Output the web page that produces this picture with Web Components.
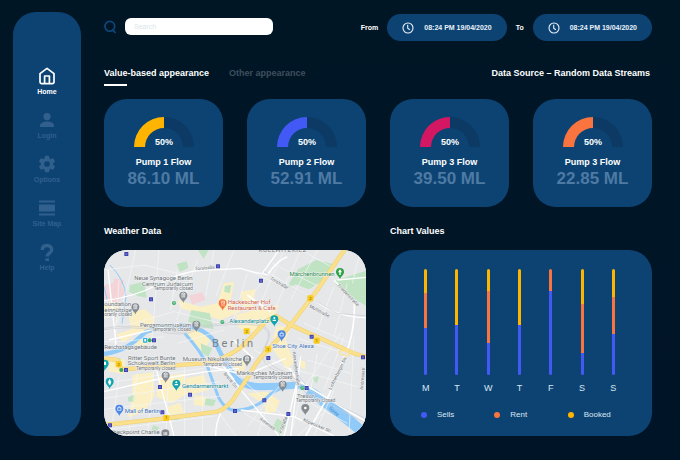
<!DOCTYPE html>
<html lang="en">
<head>
<meta charset="utf-8">
<meta name="viewport" content="width=device-width, initial-scale=1">
<title>Pump Dashboard</title>
<style>
html{background:#001525}
body{margin:0;min-height:100vh;font-family:"Liberation Sans",Arial,sans-serif;color:#fff;background:linear-gradient(180deg,#001625,#001427);--panel:#0d4373;--yellow:#ffb400;--blue:#4359f6;--orange:#f9743f;--pink:#d31763}
</style>
</head>
<body>
<pump-dashboard></pump-dashboard>

<template id="t-dashboard">
<style>
:host{display:grid;grid-template-columns:68px minmax(0,1fr);gap:23px;padding:12px 28px 24px 13px}
main{padding-top:2px}
header{display:flex;align-items:center;justify-content:space-between}
.dates{display:flex;gap:9px}
.bar{display:flex;justify-content:space-between;align-items:flex-start;margin:26px 2px 13px 0}
h2{margin:0;font-size:9px;line-height:12px;font-weight:700}
.cards{display:grid;grid-template-columns:repeat(4,minmax(0,1fr));gap:24px}
.panels{display:grid;grid-template-columns:repeat(2,minmax(0,1fr));gap:24px;margin-top:18px}
section{display:flex;flex-direction:column;gap:13px}
section>:last-child{flex:1}
</style>
<side-nav></side-nav>
<main>
<header>
<search-box></search-box>
<div class="dates">
<date-pill label="From">08:24 PM 19/04/2020</date-pill>
<date-pill label="To">08:24 PM 19/04/2020</date-pill>
</div>
</header>
<div class="bar">
<view-tabs></view-tabs>
<h2>Data Source – Random Data Streams</h2>
</div>
<div class="cards">
<pump-card style="--arc:var(--yellow)" value="86.10 ML">Pump 1 Flow</pump-card>
<pump-card style="--arc:var(--blue)" value="52.91 ML">Pump 2 Flow</pump-card>
<pump-card style="--arc:var(--pink)" value="39.50 ML">Pump 3 Flow</pump-card>
<pump-card style="--arc:var(--orange)" value="22.85 ML">Pump 3 Flow</pump-card>
</div>
<div class="panels">
<section><h2>Weather Data</h2><city-map></city-map></section>
<section><h2>Chart Values</h2><week-chart></week-chart></section>
</div>
</main>
</template>

<template id="t-nav">
<style>
:host{display:block;background:var(--panel);border-radius:23px}
nav{display:flex;flex-direction:column;gap:15px;padding:55px 0 24px}
</style>
<nav aria-label="Main">
<nav-item current>Home<svg slot="icon" viewBox="0 0 18 18" fill="none" stroke="#fff" stroke-width="1.7" stroke-linejoin="round"><path d="M2 6.6 9 1.4l7 5.2v8.2q0 1.8-1.8 1.8H3.800Q2 16.600 2 14.800zM6.600 16.600V9h4.800v7.600"/></svg></nav-item>
<nav-item>Login<svg slot="icon" viewBox="0 0 18 18" fill="currentColor"><circle cx="9" cy="5.600" r="3.600"/><path d="M2 16v-1.600c0-2.600 4.300-3.900 7-3.900s7 1.300 7 3.900V16z"/></svg></nav-item>
<nav-item>Options<svg slot="icon" viewBox="1 1 22 22" fill="currentColor"><path d="M19.430 12.980c.04-.32.07-.64.07-.98s-.03-.66-.07-.98l2.110-1.650c.19-.15.24-.42.12-.64l-2-3.460c-.12-.22-.39-.3-.61-.22l-2.490 1c-.52-.4-1.080-.73-1.690-.98l-.38-2.650A.49.490 0 0 0 14 2h-4c-.25 0-.46.18-.49.420l-.38 2.650c-.61.25-1.170.59-1.690.98l-2.490-1c-.23-.09-.49 0-.61.220l-2 3.460c-.13.220-.07.490.12.640l2.110 1.650c-.04.320-.07.650-.07.980s.03.660.07.980l-2.110 1.650c-.19.150-.24.420-.12.640l2 3.460c.12.220.39.300.61.220l2.490-1c.52.400 1.080.730 1.690.980l.38 2.650c.03.240.24.420.49.420h4c.25 0 .46-.18.49-.42l.38-2.650c.61-.25 1.170-.59 1.690-.98l2.490 1c.23.090.49 0 .61-.22l2-3.460c.12-.22.07-.49-.12-.64zM12 15.500a3.500 3.500 0 1 1 0-7 3.500 3.500 0 0 1 0 7z"/></svg></nav-item>
<nav-item>Site Map<svg slot="icon" viewBox="0 0 18 18" fill="currentColor"><path d="M1 1.500h16v2H1zM1 5.500h16v7H1zM1 14.500h16v2H1z"/></svg></nav-item>
<nav-item>Help<svg slot="icon" viewBox="0 0 18 18" fill="none" stroke="currentColor" stroke-width="3.400"><path d="M4.300 7C4.300 4 6.300 2.500 9 2.500s4.700 1.600 4.700 4.200c0 3.400-4.500 3.400-4.500 6.800"/><path d="M7.400 17h3.600"/></svg></nav-item>
</nav>
</template>

<template id="t-navitem">
<style>
:host{display:block;color:#31608d}
:host([current]){color:#fff}
a{display:flex;flex-direction:column-reverse;align-items:center;gap:3px;color:inherit;text-decoration:none;font-size:7px;line-height:8px;font-weight:700}
::slotted(svg){display:block;width:18px;height:18px}
</style>
<a href="#"><span><slot></slot></span><slot name="icon"></slot></a>
</template>

<template id="t-search">
<style>
:host{display:flex;align-items:center;gap:8px;margin-top:-2px}
svg{width:13px;height:14px}
input{box-sizing:border-box;width:148px;height:17px;border:0;border-radius:6px;padding:0 9px;background:#fff;color:#123;font:7px "Liberation Sans",Arial,sans-serif}
input::placeholder{color:#d9e7ea;opacity:1}
</style>
<svg viewBox="0 0 13 14" fill="none" stroke="#0f4679" stroke-width="1.800" aria-hidden="true"><circle cx="5.800" cy="6.300" r="4.900"/><path d="m8.300 9.300 3.200 3.700"/></svg>
<input type="search" placeholder="Search" aria-label="Search">
</template>

<template id="t-date">
<style>
:host{display:flex;align-items:center;gap:9px;font-size:7px;font-weight:700}
button{display:flex;align-items:center;gap:10px;height:27px;padding:0 15px;border:0;border-radius:14px;background:var(--panel);color:#e9f2fa;font:inherit}
svg{width:12px;height:12px}
</style>
<label for="when"></label>
<button id="when" type="button"><svg viewBox="0 0 12 12" fill="none" stroke="currentColor" stroke-width="1.100"><circle cx="6" cy="6" r="5"/><path d="M5.700 2.800v3.500l2.200 1.500"/></svg><span><slot></slot></span></button>
</template>

<template id="t-tabs">
<style>
:host{display:flex;gap:20px}
button{display:flex;flex-direction:column;gap:5px;padding:0;border:0;background:none;color:#3f4f5e;font:700 9px/12px "Liberation Sans",Arial,sans-serif}
button::after{content:"";width:23px;height:2px}
button[aria-selected=true]{color:#fff}
button[aria-selected=true]::after{background:#fff}
</style>
<button type="button" role="tab" aria-selected="true">Value-based appearance</button>
<button type="button" role="tab" aria-selected="false">Other appearance</button>
</template>

<template id="t-pump">
<style>
:host{display:flex;flex-direction:column;align-items:center;padding:18px 0;border-radius:23px;background:var(--panel);font-weight:700}
svg{width:60px;height:30px;margin-bottom:9px}
.name{font-size:9px;line-height:12px}
.value{margin-top:1px;font-size:17px;line-height:20px;color:#4e7aa3}
</style>
<svg viewBox="0 0 60 30"><path fill="#0c3a64" d="M30 0a30 30 0 0 1 30 30H49A19 19 0 0 0 30 11z"/><path fill="var(--arc)" d="M0 30A30 30 0 0 1 30 0V11A19 19 0 0 0 11 30z"/><text x="30" y="28" text-anchor="middle" font-size="9" fill="#fff">50%</text></svg>
<div class="name"><slot></slot></div>
<div class="value"></div>
</template>

<template id="t-chart">
<style>
:host{display:block;border-radius:23px;background:var(--panel);color:#dbe7f2;font-size:8px}
.days{display:grid;grid-template-columns:repeat(7,1fr);padding:19px 23px 0 20px}
.legend{display:grid;grid-template-columns:repeat(3,1fr);padding:17px 11px 15px 31px}
</style>
<div class="days"></div>
<div class="legend">
<legend-item style="--dot:var(--blue)">Sells</legend-item>
<legend-item style="--dot:var(--orange)">Rent</legend-item>
<legend-item style="--dot:var(--yellow)">Booked</legend-item>
</div>
</template>

<template id="t-day">
<style>
:host{display:flex;flex-direction:column;align-items:center;gap:8px;line-height:10px;font-size:9px}
.bar{display:flex;flex-direction:column;width:3px;height:106px;border-radius:2px;overflow:hidden}
.b{background:var(--yellow)}.r{background:var(--orange)}.s{background:var(--blue)}
</style>
<div class="bar"><i class="b"></i><i class="r"></i><i class="s"></i></div>
<span><slot></slot></span>
</template>

<template id="t-legend">
<style>
:host{display:flex;align-items:center;gap:10px;line-height:10px}
:host::before{content:"";width:6px;height:6px;border-radius:50%;background:var(--dot)}
</style>
<span><slot></slot></span>
</template>

<template id="t-map">
<style>
:host{display:block;border-radius:23px;overflow:hidden;background:#e6e7e9}
svg{display:block;width:100%;height:100%;aspect-ratio:262/186;font-family:Roboto,sans-serif}
.halo text{paint-order:stroke;stroke:#f3f4f5;stroke-width:3;stroke-linejoin:round}
</style>
<svg viewBox="0 0 786 558" preserveAspectRatio="xMidYMid slice" role="img" aria-label="Map of central Berlin">
<defs>
<g id="pin"><path d="M0 0C-2-9-12-13-12-22a12 12 0 0 1 24 0C12-13 2-9 0 0z"/></g>
<g id="u"><rect x="-6" y="-6" width="12" height="12" rx="1" fill="#3a3fb0"/><path d="M-2-3V1q0 2 2 2t2-2V-3" fill="none" stroke="#c9cbf2" stroke-width="1"/></g>
<g id="road"><rect x="-9" y="-9" width="18" height="18" rx="3" fill="#f8cb1c"/></g>
</defs>
<rect width="786" height="558" fill="#e6e7e9"/>
<g fill="#fbefc4">
<path d="m72 190 50-12 30 25-10 50-45-5-40 30-20-25 45-15zM20 320l45 10-8 42-45-8zM85 375l62-8 5 70-30 50-52 15 15-60zM165 380l75-10 12 60-50 30-45-20zM245 385l55-10 15 45-60 15zM190 470l40-12 10 30-45 8zM360 100l30-5-10 60 30 30-60 25-120-35-10-25 70 20 50-10zM395 195l70-20 60-10-20 50-60 30-40-10zM240 240l40-10 40 40-25 35zM385 320l40 10-5 45-25-10zM495 280l50-10 25 65-20 25zM430 430l60-5 40 30-20 15-50-20zM480 465l45-8-10 28-28 5zM85 265l50 5-10 20-50-8zM0 160l40-5 5 25-45 25zM590 330l15 5-2 24-20-12zM410 125l45-8-8 50-30 20zM520 225l40 10-15 35-40-5zM270 435l35 5-5 30-30-5z"/>
</g>
<g fill="#bfe3c3">
<path d="m582 58 55-28 50 12-12 38-60 38-40-15-30 15zM692 92l94-30v105l-50-28-38-30zM262 180l55 10 12 48-35-8-42-15zM78 105l42-10 8 48-26-5-26-12zM282 0h32l-15 26zM218 42l30-8 5 20-25 12zM362 108l20-3-5 25-16-5zM290 280l35 15-12 25-20-12zM624 385l22-8-8 24zM306 445l30 5-8 18-26-3zM72 442l20-8-2 22-18-2zM425 265l14 12-10 12-8-14zM520 505l30 20-25 33-20-25zM148 525l18 8-10 14-14-6zM205 495l22 3-5 14-20-4zM10 325h40v8H10z"/>
</g>
<g fill="#f3d4d8"><path d="m0 105 48-10 15 35-22 28-41-8zM255 137l40-10 10 22-40 15zM30 85l30 5-8 18-25-5z"/></g>
<g fill="none" stroke="#90caf9">
<path stroke-width="13" d="M0 312q45-8 70-23t55-43l40-12q70-15 110 0t60 45q20 45 45 80 25 45 80 48l120 2q40 0 70 28l90 65 55 50"/>
<path stroke-width="21" d="M395 385q25 25 75 25t110-5M610 425l80 58 90 72"/>
<path stroke-width="9" d="M242 250q50 55 68 98l30 85q20 50 60 48 55-5 85-35 25-27 60-35"/>
<path stroke-width="3" d="M18 45q45 45 48 95l-12 80M0 110l10 40"/>
</g>
<g fill="none" stroke="#f6f7f8" stroke-width="2">
<path d="M95 0 75 90 40 220M165 0 142 290M220 60l-20 120M280 30l-62 180M330 0l-25 140M390 0l-55 140M430 70 390 205M480 90l-50 60M540 0l-70 160M590 0l-90 205M640 0 560 150M505 40l140 70M430 60l75 35M690 110 640 240M730 100l-40 160M600 220l140 60M580 265l160 50M540 350l220 60M590 430l120-180M660 420l60-160M750 260l-15 290M610 330l130 40M640 310l-20 110M690 420l-60 138M0 60l120-15 140 35M0 245l210-60 180 45M0 205l80-15M45 90 32 300M45 380l-25 178M100 370 72 558M150 360l-20 198M195 350l-10 208M242 345v213M295 360v198M0 400l300-45M0 445l350-50M0 478l350-40M0 540l330-42M370 350l170 150M340 480l55 78M500 440l-40 118M590 440 560 558M420 490l120 68M450 300l110 60M620 460l110 60M670 480l-90 78M430 530l110-140M360 240l-140 40M0 275h60l120-15M770 0l-25 100M700 60l-100-55"/>
</g>
<g fill="none" stroke="#fff">
<path stroke-width="4" d="M0 152q90-10 165-50T300 60t110-5q45 15 90 20l130 75q70 52 156 53M12 60l25 230M0 425l150-35 160-25 95-10M300 345l125 30 120-50M15 270l210-50M590 320l-30 238M540 560l40-170M355 345l60 80 110 133M350 490q-15 30-15 68M155 350l55 208M410 480l160 20 120 58M475 70l50-70M700 90l86-8"/>
<path stroke-width="5" d="M690 90l60 65q5 60-15 130l-60 150-70 123M580 390l206 125M555 355l30 40M388 270l60 55M550 20q-30 10-60 55M430 135l70 50"/>
</g>
<g fill="none" stroke="#c9ccd0" stroke-width="2">
<path d="M0 235q80-15 160 3t110 0 140-20 80 60 60 90l60 50 170 85M0 240q80-15 160 3t110 0 140-20 75 60 60 90l60 55 175 88M570 300v60l35 45M480 65l220 125 90 8"/>
</g>
<g fill="none" stroke-linejoin="round">
<path stroke="#efce72" stroke-width="13" d="M0 525l185-20 155-20q20-5 45-33l50-75q25-50 60-80l65-72 80-105 60-90 25-35M0 325l40 5 12 28 270-20q65-25 100-55l65-70 30-15 45 28 160 72q32 16 64 22"/>
<path stroke="#fbe08c" stroke-width="10" d="M0 525l185-20 155-20q20-5 45-33l50-75q25-50 60-80l65-72 80-105 60-90 25-35M0 325l40 5 12 28 270-20q65-25 100-55l65-70 30-15 45 28 160 72q32 16 64 22"/>
<ellipse cx="720" cy="310" rx="16" ry="6" fill="#e6e7e9" stroke="#fbe29a" stroke-width="4" transform="rotate(18 720 310)"/>
</g>
<use href="#u" x="67" y="12"/><use href="#u" x="342" y="49"/><use href="#u" x="471" y="92"/><use href="#u" x="141" y="148"/><use href="#u" x="150" y="271"/><use href="#u" x="623" y="260"/><use href="#u" x="777" y="322"/><use href="#u" x="493" y="324"/><use href="#u" x="66" y="360"/><use href="#u" x="168" y="411"/><use href="#u" x="258" y="434"/><use href="#u" x="608" y="414"/><use href="#u" x="481" y="451"/><use href="#u" x="393" y="483"/><use href="#u" x="175" y="487"/><use href="#u" x="553" y="492"/><use href="#u" x="18" y="526"/>
<g fill="#34a865"><circle cx="210" cy="159" r="6"/><circle cx="355" cy="216" r="6"/><circle cx="137" cy="271" r="6"/><circle cx="52" cy="360" r="6"/><circle cx="595" cy="414" r="6"/></g>
<g fill="none" stroke="#e0f4e6" stroke-width="1.500"><path d="M207 157q3-3 6 0t-6 3M352 214q3-3 6 0t-6 3M592 412q3-3 6 0t-6 3"/></g>
<rect x="117" y="264" width="13" height="14" rx="2" fill="#29b6e8"/><rect x="121" y="267" width="5" height="7" fill="#fff"/>
<g font-size="12" text-anchor="middle" fill="#6b5200"><use href="#road" x="619" y="145"/><text x="619" y="149">2</text><use href="#road" x="428" y="244"/><text x="428" y="248">2</text><use href="#road" x="638" y="272"/><text x="638" y="276">1</text><use href="#road" x="492" y="298"/><text x="492" y="302">1</text><use href="#road" x="44" y="343"/><text x="44" y="347">2</text><use href="#road" x="187" y="504"/><text x="187" y="508">1</text></g>
<g fill="#858b91"><use href="#pin" x="238" y="159"/><use href="#pin" x="94" y="194"/><use href="#pin" x="277" y="246"/><use href="#pin" x="429" y="350"/><use href="#pin" x="185" y="399"/><use href="#pin" x="536" y="426"/><use href="#pin" x="604" y="496"/><use href="#pin" x="184" y="572"/></g>
<use href="#pin" x="356" y="182" fill="#f4743b"/><use href="#pin" x="708" y="88" fill="#2ea245"/>
<g fill="#12a5b0"><use href="#pin" x="511" y="230"/><use href="#pin" x="217" y="423"/><use href="#pin" x="17" y="417"/><use href="#pin" x="2" y="363"/></g>
<g fill="#4a86e8"><use href="#pin" x="533" y="275"/><use href="#pin" x="46" y="498"/></g>
<g fill="none" stroke="#fff" stroke-width="2"><path d="M232 141h12M234 133v7M238 133v7M242 133v7M232 132l6-4 6 4zM88 176h12M90 168v7M94 168v7M98 168v7M88 167l6-4 6 4zM271 228h12M273 220v7M277 220v7M281 220v7M271 219l6-4 6 4zM423 332h12M425 324v7M429 324v7M433 324v7M423 323l6-4 6 4zM179 381h12M181 373v7M185 373v7M189 373v7M179 372l6-4 6 4zM530 408h12M532 400v7M536 400v7M540 400v7M530 399l6-4 6 4zM178 554h12M180 546v7M184 546v7M188 546v7M352 152v6q0 3 2 3v8M356 152v6M360 169v-17q3 4 0 10M528 250h10v8h-10zM530 249q3-5 6 0M41 473h10v8H41zM43 472q3-5 6 0"/></g>
<g fill="#fff"><circle cx="604" cy="474" r="4"/><path d="m708 57 6 10h-4v8h-4v-8h-4zM17 386l5 10-3 8h-4l-3-8z"/><circle cx="511" cy="204" r="3"/><path d="M506 209h10v4h-10z"/><circle cx="217" cy="397" r="3"/><path d="M212 402h10v4h-10zM0 335h6v10H0z"/></g>
<g class="halo" font-size="18">
<g fill="#6d7378">
<g text-anchor="end"><text x="266" y="89">Neue Synagoge Berlin</text><text x="267" y="107">Centrum Judaicum</text><text x="261" y="231">Pergamonmuseum</text><text x="414" y="334">Museum Nikolaikirche</text><text x="214" y="329">Ritter Sport Bunte</text><text x="214" y="346">Schokowelt Berlin</text><text x="565" y="374">Märkisches Museum</text></g>
<text x="1" y="169">oundation</text><text x="1" y="186">einnützige</text><text x="1" y="297">Reichstagsgebäude</text><text x="28" y="553">heckpoint Charlie</text>
<text x="579" y="443">Tresor</text>
<g font-size="14"><g text-anchor="end"><text x="267" y="120">Temporarily closed</text><text x="261" y="244">Temporarily closed</text><text x="414" y="347">Temporarily closed</text><text x="214" y="360">Temporarily closed</text><text x="565" y="388">Temporarily closed</text></g><text x="1" y="199">orarily closed</text><text x="576" y="456">Temporarily closed</text>
<text transform="translate(273 61) rotate(-5)">Torstraße</text><text transform="translate(497 88) rotate(30)">Torstraße</text><text transform="translate(615 172) rotate(28)">Mollstraße</text><text transform="translate(700 108) rotate(46)">Friedenstraße</text><text transform="translate(566 306) rotate(83)">Alexanderstraße</text><text transform="translate(682 420) rotate(-64)">Lichtenberger Str.</text><text transform="translate(358 372) rotate(50)">Breite Str.</text><text transform="translate(466 508) rotate(38)">Annenstr.</text><text transform="translate(596 513) rotate(23)">Köpenicker Str.</text><text transform="translate(532 550) rotate(-68)">e Straße</text><text transform="translate(777 420) rotate(-85)">Andreasstr.</text></g>
</g>
<g fill="#d6633f"><text x="371" y="162">Hackescher Hof</text><text x="371" y="179">Restaurant &amp; Cafe</text></g>
<text x="692" y="78" text-anchor="end" fill="#2b8a4a">Märchenbrunnen</text>
<g fill="#128a96"><text x="495" y="219" text-anchor="end">Alexanderplatz</text><text x="234" y="413">Gendarmenmarkt</text></g>
<g fill="#3d70b8"><text x="505" y="295">Shoe City Alexa</text><text x="62" y="488">Mall of Berlin</text></g>
</g>
<text transform="translate(674 475) rotate(43)" font-size="14" fill="#4282b8">Spree</text>
<g fill="#7d8288"><text x="324" y="290" font-size="33" letter-spacing="8">Berlin</text><text x="464" y="5" font-size="18" letter-spacing="2">KOLLWITZKIEZ</text></g>
</svg>
</template>

<script>
class Base extends HTMLElement {
  constructor() {
    super();
    this.attachShadow({ mode: "open" });
    this.shadowRoot.append(document.getElementById(this.constructor.template).content.cloneNode(true));
  }
}
const make = (name, template, connect) => {
  class El extends Base {
    static template = template;
    connectedCallback() { if (connect) connect(this, this.shadowRoot); }
  }
  customElements.define(name, El);
};
make("nav-item", "t-navitem", (el, root) => {
  if (el.hasAttribute("current")) root.querySelector("a").setAttribute("aria-current", "page");
});
make("side-nav", "t-nav");
make("search-box", "t-search");
make("date-pill", "t-date", (el, root) => {
  root.querySelector("label").textContent = el.getAttribute("label");
});
make("view-tabs", "t-tabs", (el, root) => {
  el.setAttribute("role", "tablist");
  const tabs = [...root.querySelectorAll("button")];
  tabs.forEach(t => t.onclick = () => tabs.forEach(o => o.setAttribute("aria-selected", o === t)));
});
make("pump-card", "t-pump", (el, root) => {
  root.querySelector(".value").textContent = el.getAttribute("value");
});
make("legend-item", "t-legend");
make("day-bar", "t-day", (el, root) => {
  const parts = el.getAttribute("parts").split(" ");
  root.querySelectorAll("i").forEach((seg, i) => { seg.style.flex = parts[i] + " 0 0px"; });
});
make("week-chart", "t-chart", (el, root) => {
  const week = [["M", "24 35 47"], ["T", "56 0 50"], ["W", "22 52 32"], ["T", "56 0 50"], ["F", "0 22 84"], ["S", "35 49 22"], ["S", "28 37 41"]];
  root.querySelector(".days").replaceChildren(...week.map(([day, parts]) => {
    const bar = document.createElement("day-bar");
    bar.setAttribute("parts", parts);
    bar.textContent = day;
    return bar;
  }));
});
make("city-map", "t-map");
make("pump-dashboard", "t-dashboard");
</script>
</body>
</html>
